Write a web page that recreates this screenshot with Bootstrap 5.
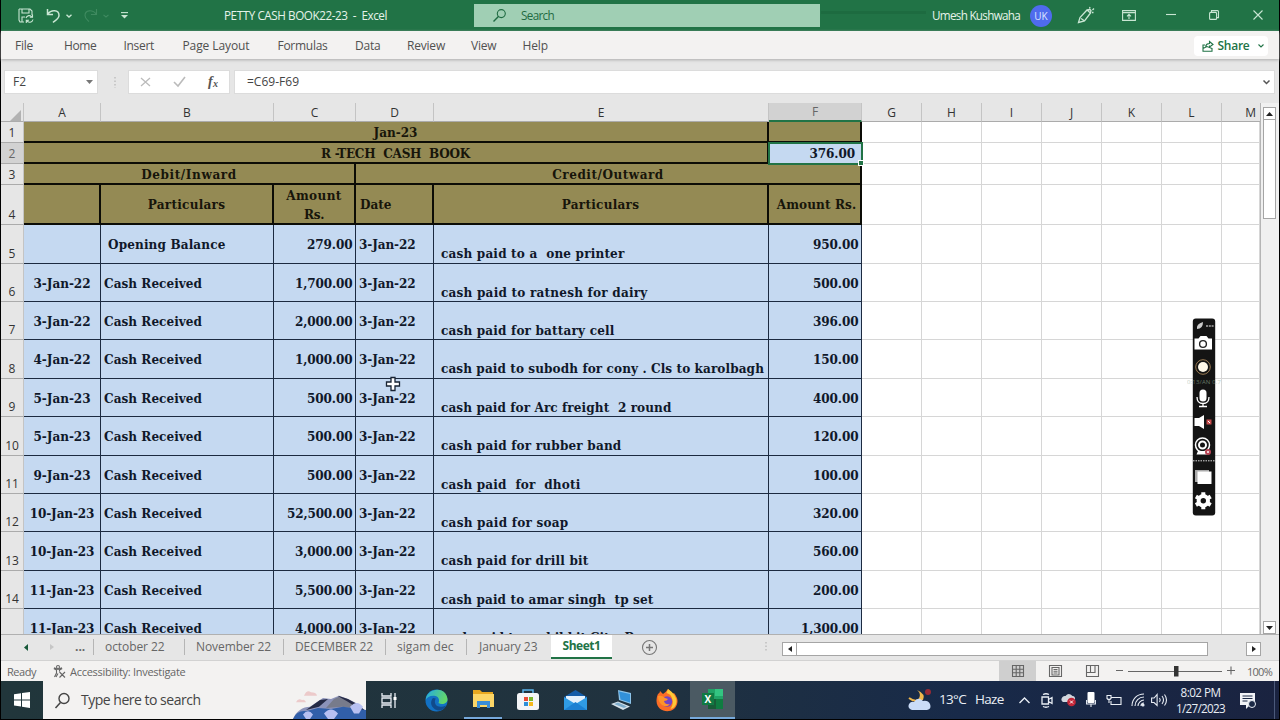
<!DOCTYPE html>
<html lang="en">
<head>
<meta charset="utf-8">
<meta name="viewport" content="width=device-width, initial-scale=1">
<title>PETTY CASH BOOK22-23 - Excel</title>
<link href="https://cdn.jsdelivr.net/npm/bootstrap@5.3.0/dist/css/bootstrap.min.css" rel="stylesheet">
<style>
:root{--xl:#217346}
html,body{height:720px;overflow:hidden}
body{font-family:"Open Sans","Noto Sans",sans-serif;font-size:12px;line-height:1;color:#444;background:#000}
.window{width:1278px;height:719px;margin-left:1px;background:#e6e6e6}
.bar{display:grid;align-items:center;justify-items:start}
.bar svg,.widget svg{display:block;overflow:visible}
.fit{white-space:pre;display:inline-block}
.ln{fill:none;stroke:currentColor;stroke-width:1.1}
/* title bar */
.titlebar{height:31px;background:linear-gradient(125deg,transparent 1090px,#1c693e 1091px,#1c693e 1097px,transparent 1098px),linear-gradient(#1d6b40,#1d6b40) 820px 11px/105px 3px no-repeat,var(--xl);color:#e6f3ea;grid-template-columns:17px 28px 20px 17px 20px 18px 103px 250px 458px 98px 47px 45px 44px 43px 44px 1fr}
.titlebar>svg{color:#c9e6d3}
.titlebar .dim{color:#3f8a60}
.titlebar .fit{font-size:11.7px}
.searchbox{width:346px;height:23px;background:#a0cfb4;color:#1f6b42}
.lens{margin-left:19px}
.lens+.fit{margin-left:15px}
.avatar{width:22px;height:22px;background:#4f6bed;color:#dfe5ff;font-size:10px}
/* menu */
.menubar{height:28px;padding-top:1px;background:#f3f2f1;color:#505050;grid-template-columns:14px 49px 59.5px 59px 95px 77.5px 52px 64px 51.5px 671px 1fr;box-shadow:0 1px 3px #aaa;position:relative}
.sharebtn{width:74px;height:20px;background:#fff;color:var(--xl)}
/* formula bar */
.formulabar{height:44px;padding-top:2px;grid-template-columns:3px 94px 30px 106px 1fr}
.fbox{height:24px;background:#fff;border:1px solid #dcdcdc}
.fxbox{width:102px}
.fxin{width:1041px}
/* sheet */
.sheetwrap{height:532px;overflow:hidden;border-bottom:1px solid #b0b0b0}
.sheet{display:grid;width:1259px;flex:none;grid-template-columns:23px 77px 173px 82px 78px 335px 93px repeat(6,60px) 38px;grid-template-rows:19px 21px 21px 21px 40px 38.6px repeat(10,38.4px);align-content:start;background:#fff;font-family:"DejaVu Serif Condensed","DejaVu Serif",serif;font-weight:700;font-size:13.4px;color:#10182a}
.sheet>div{display:flex;overflow:hidden;border-right:1px solid #d6d6d6;border-bottom:1px solid #d6d6d6;min-width:0}
.sheet>.hd{background:#e6e6e6;border-color:#c4c4c4;border-bottom-color:#ababab;font:400 12px "Open Sans",sans-serif;color:#333;align-items:center;justify-content:center}
.sheet>.rn{align-items:flex-end;line-height:15px;padding-bottom:2px}
.sheet>.sel{background:#d2d2d2;color:#666}
.sheet>.fcol{border-bottom:2px solid var(--xl)}
.sheet>.ol{background:#948a54;color:#17150a;border-right:2px solid #0c0c06;border-bottom:2px solid #0c0c06;align-items:center;justify-content:center;text-align:center;line-height:19px;padding-top:1px}
.sheet>.bl{background:#c5d9f1;border-color:#1c2a40;align-items:center;padding-top:2px}
.sheet>.part{align-items:flex-end;padding:0 0 2px 7px}
.sheet>.amt{padding-right:2.5px}
.corner{width:0;height:0;border-left:11px solid transparent;border-bottom:11px solid #b2b2b2;margin:6px 0 0 6px}
.sheet>.active{position:relative;overflow:visible;background:#c5d9f1;border:0;outline:2px solid var(--xl);outline-offset:-1px;align-items:center;justify-content:flex-end;padding-right:7px;z-index:2}
.handle{position:absolute;right:-2px;bottom:-2px;width:6px;height:6px;background:var(--xl);border:1px solid #fff}
.vscroll{background:#f0f0f0;border-left:1px solid #b5b5b5;padding-left:2px}
.sbtn{width:13px;height:13px;background:#fff;border:1px solid #a5a5a5;color:#222}
.vthumb{width:13px;height:99px;background:#fff;border:1px solid #a5a5a5;border-top:0}
/* sheet tabs */
.tabs{height:26px;color:#666;border-bottom:1px solid #d2d2d2;grid-template-columns:22px 27px 25px 18px 91px 99px 102px 81px 85px 91px 123px 17px 1fr;align-items:start}
.tabs>*{height:24px;display:flex;align-items:center}
.tabs>.tb{border-left:1px solid #b5b5b5;padding-left:11px;height:16px;margin-top:4px}
.tactive{background:#fff;border-bottom:2px solid var(--xl);color:var(--xl);font-weight:700;width:61px;justify-content:center}
.tabs>.tb:nth-child(9){padding-left:12px}
.hs{height:14px;border:1px solid #a5a5a5;background:#fff}
.hbtn{width:15px}
.hthumb{width:411px}
.hgap{width:38px}
/* status */
.status{height:20px;background:#f3f2f1;font-size:11px;color:#666;grid-template-columns:6px 46px 17px 929px 41.5px 37px 38.5px 131px 1fr}
.view-on{width:37px;height:100%;background:#cfcfcf;display:flex;align-items:center;justify-content:center}
/* taskbar */
.taskbar{height:38px;background:linear-gradient(90deg,#21363b 0,#20323f 50%,#182a49 75%,#1a2340 100%);color:#e9eef5;grid-template-columns:42px 338px 44px 47px 45px 47px 47px 45px 34px 218px 31px 36px 44px 22px 20px 25px 20px 25px 20px 25px 57px 1fr}
.startbtn{width:42px;height:100%;display:flex;align-items:center;padding-left:13px}
.tsearch{width:323px;height:100%;background:#f3f2f1;color:#444;overflow:hidden;display:flex;align-items:center}
.tsearch .fit{font-size:14px}
.opened{width:38px;height:100%;border-bottom:2px solid #76a9dc;display:flex;align-items:center;justify-content:center;margin-left:-8px}
.xlrun{width:45px;height:100%;background:#4b5a63;border-bottom:2px solid #76a9dc;display:flex;align-items:center;justify-content:center}
.t14{font-size:13.5px}
.clock{text-align:center;line-height:16px;font-size:11.7px}
/* floating recorder and pointer */
.widget{position:absolute;left:1192px;top:318px;width:24px;height:198px}
.pointer{position:absolute;left:385px;top:376px}
</style>
</head>
<body>
<div class="window d-flex flex-column">

<header class="bar titlebar">
  <span></span>
  <svg width="16" height="16" viewBox="0 0 16 16" class="ln"><path d="M1 1h11l2 2v4M1 1v11l1 2h4M4 1v4h7V1M4 14V9h3M8 10a3.4 3.4 0 0 1 6-1M14.500 6.500V9.200h-2.700M15 11.500a3.400 3.400 0 0 1-6.300 1M8.300 15v-2.700h2.700" class="ln"/></svg>
  <svg width="15" height="15" viewBox="0 0 15 15" class="ln"><path d="M1.500 1v5.500H7M1.800 6.200C5 1.500 13 1.500 13 7.500c0 3-3.500 5-6 7" stroke-width="1.500"/></svg>
  <svg width="6" height="4" viewBox="0 0 6 4" class="ln"><path d="M.5.8 3 3 5.500.8" stroke-width="1.400"/></svg>
  <svg width="15" height="15" viewBox="0 0 15 15" class="ln dim"><path d="M13.500 1v5.500H8M13.200 6.200C10 1.500 2 1.500 2 7.500c0 3 2 4 4 6"/></svg>
  <svg width="6" height="4" viewBox="0 0 6 4" class="ln dim"><path d="M.5.8 3 3 5.500.8"/></svg>
  <svg width="7" height="7" viewBox="0 0 7 7"><path d="M0 .6h7" class="ln"/><path d="M0 3h7L3.500 6.500z" fill="currentColor"/></svg>
  <span class="fit" data-w="163">PETTY CASH BOOK22-23  -  Excel</span>
  <div class="searchbox d-flex align-items-center">
    <svg width="13" height="13" viewBox="0 0 13 13" class="ln lens"><circle cx="8.300" cy="4.600" r="4"/><path d="M5.400 7.500.5 12.500" stroke-width="1.400"/></svg>
    <span class="fit" data-w="33">Search</span>
  </div>
  <span class="fit" data-w="88">Umesh Kushwaha</span>
  <span class="avatar rounded-circle d-flex align-items-center justify-content-center">UK</span>
  <svg width="17" height="17" viewBox="0 0 17 17" class="ln"><path d="M1.500 15.500 3 10.500 10 3l3.500 3-6 8zM10 3l3-.5 1 1-.5 2.500M4 11.500l3 2M12.500 1.500 13 0M15.500 3 17 1.500M15 5.500h1.500" stroke-width="1.300"/></svg>
  <svg width="14" height="11" viewBox="0 0 14 11" class="ln"><path d="M.6.6h12.800v9.800H.6zM.6 2.600h12.800M7 9V4.500M5 6.300l2-2 2 2"/></svg>
  <svg width="10" height="4" viewBox="0 0 10 4" class="ln"><path d="M0 .5h10"/></svg>
  <svg width="10" height="12" viewBox="0 0 10 12" class="ln"><rect x=".6" y="2.400" width="7" height="7" rx="1"/><path d="M2.500 2.200V.6h6q1 0 1 1v6H8"/></svg>
  <svg width="10" height="12" viewBox="0 0 10 12" class="ln"><path d="m.5.5 9 9M9.500.5l-9 9"/></svg>
</header>

<nav class="bar menubar">
  <span></span>
  <span class="fit" data-w="18">File</span><span class="fit" data-w="32.500">Home</span><span class="fit" data-w="30.500">Insert</span><span class="fit" data-w="67">Page Layout</span><span class="fit" data-w="50">Formulas</span><span class="fit" data-w="25.500">Data</span><span class="fit" data-w="38">Review</span><span class="fit" data-w="25.500">View</span><span class="fit" data-w="25.500">Help</span>
  <div class="sharebtn rounded-1 d-flex align-items-center ps-1">
    <svg width="12" height="12" viewBox="0 0 12 12" class="ln ms-1"><path d="M3 5H1v6.300h9V8M1 8.500 5 6.500l5 2M3.500 6.500c.5-2 2-3 4-3V1.500L11 4.500 7.500 7V5.500"/></svg>
    <span class="fit fw-semibold ms-1" data-w="32">Share</span>
    <svg width="6" height="4" viewBox="0 0 6 4" class="ln ms-auto me-1"><path d="M.5.5 3 3 5.500.5"/></svg>
  </div>
</nav>

<div class="bar formulabar">
  <span></span>
  <div class="fbox w-100 d-flex align-items-center justify-content-between ps-1 pe-1"><span class="fit ms-1" data-w="13">F2</span><svg width="7" height="4" viewBox="0 0 7 4"><path d="M0 0h7L3.500 4z" fill="#777"/></svg></div>
  <svg width="2" height="11" viewBox="0 0 2 11" class="ms-3"><path d="M1 0v11" stroke="#aaa" stroke-dasharray="1.500 2"/></svg>
  <div class="fbox fxbox d-flex align-items-center">
    <svg width="102" height="20" viewBox="0 0 102 20"><path d="m12 6 9 8M21 6l-9 8" fill="none" stroke="#bbb" stroke-width="1.300"/><path d="m45 10 4 4 7-9" fill="none" stroke="#bbb" stroke-width="1.600"/><text x="79" y="14" font-family="Liberation Serif" font-style="italic" font-weight="700" font-size="14" fill="#555">f</text><text x="84" y="14.500" font-family="Liberation Serif" font-style="italic" font-weight="700" font-size="10" fill="#555">x</text></svg>
  </div>
  <div class="fbox fxin d-flex align-items-center justify-content-between ps-2 pe-1"><span class="fit ps-1" data-w="56">=C69-F69</span><svg width="7" height="5" viewBox="0 0 7 5"><path d="m.5.5 3 3 3-3" fill="none" stroke="#555" stroke-width="1.500"/></svg></div>
</div>

<main class="sheetwrap d-flex">
  <div class="sheet" id="sheet"></div>
  <div class="vscroll d-flex flex-column flex-grow-1">
    <div class="sbtn mt-1 flex-shrink-0 d-flex align-items-center justify-content-center"><svg width="7" height="4" viewBox="0 0 7 4"><path d="M0 4h7L3.500 0z" fill="currentColor"/></svg></div>
    <div class="vthumb"></div>
    <div class="sbtn mt-auto flex-shrink-0 d-flex align-items-center justify-content-center"><svg width="7" height="4" viewBox="0 0 7 4"><path d="M0 0h7L3.500 4z" fill="currentColor"/></svg></div>
  </div>
</main>

<div class="bar tabs">
  <span></span>
  <span><svg width="5" height="7" viewBox="0 0 5 7" class="ms-0"><path d="M5 0v7L1 3.500z" fill="#17593a"/></svg></span>
  <span><svg width="4" height="6" viewBox="0 0 4 6"><path d="M0 0v6l4-3z" fill="#c6c6c6"/></svg></span>
  <span class="fw-bold">...</span>
  <span class="tb"><span class="fit" data-w="59.500">october 22</span></span>
  <span class="tb"><span class="fit" data-w="75">November 22</span></span>
  <span class="tb"><span class="fit" data-w="78">DECEMBER 22</span></span>
  <span class="tb"><span class="fit" data-w="56.500">sigam dec</span></span>
  <span class="tb"><span class="fit" data-w="58.500">January 23</span></span>
  <span class="tactive"><span class="fit" data-w="38">Sheet1</span></span>
  <span><svg width="15" height="15" viewBox="0 0 15 15" class="ln" color="#777"><circle cx="7.500" cy="7.500" r="7"/><path d="M7.500 4v7M4 7.500h7" stroke-width="1.500"/></svg></span>
  <span><svg width="2" height="10" viewBox="0 0 2 10"><path d="M1 0v10" stroke="#aaa" stroke-dasharray="1.500 2"/></svg></span>
  <div class="w-100 pt-1">
    <div class="hs hbtn d-flex align-items-center justify-content-center"><svg width="4" height="6" viewBox="0 0 4 6"><path d="M4 0v6L0 3z" fill="#222"/></svg></div>
    <div class="hs hthumb border-start-0"></div><div class="hgap"></div>
    <div class="hs hbtn d-flex align-items-center justify-content-center"><svg width="4" height="6" viewBox="0 0 4 6"><path d="M0 0v6l4-3z" fill="#222"/></svg></div>
  </div>
</div>

<div class="bar status">
  <span></span>
  <span class="fit" data-w="29">Ready</span>
  <svg width="13" height="13" viewBox="0 0 13 13" class="ln"><circle cx="5" cy="2" r="1.500"/><path d="M.8 3.500 3.500 5v3L1.500 12M9.200 3.500 6.500 5v1.500M1 2.800l4 1.500 4-1.500M3 12l2-3.500M6.500 7l5.500 5.500M12 7l-5.500 5.500"/></svg>
  <span class="fit" data-w="115.500">Accessibility: Investigate</span>
  <span class="view-on"><svg width="12" height="12" viewBox="0 0 12 12" class="ln"><path d="M.5.5h11v11H.5zM.5 4.200h11M.5 7.800h11M4.200.5v11M7.800.5v11"/></svg></span>
  <svg width="13" height="12" viewBox="0 0 13 12" class="ln ms-2"><path d="M.5.500h12v11H.5zM3 2.500h7v7.500H3zM4.500 4.500h4M4.500 6.200h4M4.500 8h4"/></svg>
  <svg width="13" height="12" viewBox="0 0 13 12" class="ln ms-2"><path d="M.5.500h12v11H.5zM.5 7.500H9v-7M4.500.5v7"/></svg>
  <svg width="116" height="12" viewBox="0 0 116 12" class="ln"><path d="M0 5.500h7M12 6.500h94M111 5.500h8M115 1.500v8"/><path d="M58 1h4.500v10.500H58z" fill="#333" stroke="none"/></svg>
  <span class="fit" data-w="25">100%</span>
</div>

<footer class="bar taskbar">
  <span class="startbtn"><svg width="16" height="16" viewBox="0 0 16 16"><path d="M0 2.300 7 1.300v6.200H0zM8 1.100 16 0v7.500H8zM0 8.400h7v6.200l-7-1zM8 8.400h8V16l-8-1.200z" fill="#fff"/></svg></span>
  <div class="tsearch">
    <svg width="38" height="27" viewBox="0 0 38 27" class="ln flex-shrink-0"><circle cx="21" cy="11.500" r="5" stroke-width="1.400"/><path d="m17.500 15.500-5 5.500" stroke-width="1.500"/></svg>
    <span class="fit" data-w="119.500">Type here to search</span>
    <svg width="73" height="30" viewBox="0 0 73 27" preserveAspectRatio="none" class="ms-auto mt-auto flex-shrink-0"><path d="M4 17q2-4 6-2 3-1 4 2zM12 11q3-6 7-3 5 0 6 3z" transform="translate(-1 -5)" fill="#eccaca"/><path d="M0 27C3 20 10 16 17 16l13-8 8 1 8-3 9 3 9 4 9 7v10z" fill="#8c93ba"/><path d="m13 19 14-9 8-1-9 7zM45 6l10 3 8 4 10 7v3l-14-7-7-3z" fill="#252a45"/><path d="m33 17 8-8 5-2 8 4 12 7-8-1-9-1z" fill="#777b8b"/><path d="M0 27q4-8 13-7l12-3 13 1 12-2 23 3v8z" fill="#315fa9"/><path d="M10 23q5-6 10 0l-3 4h-4zM31 22q7-7 14 0l-4 5h-6zM57 16q7-7 13 0l-4 6h-5z" fill="#b7c0f1"/></svg>
  </div>
  <svg width="16" height="15" viewBox="0 0 16 15" class="ln"><path d="M1 0v3h9V0M1 15v-3h9v3M1 5h9v5H1zM14 0v15" stroke-width="1.300"/><path d="M12.500 4h3v3h-3z" fill="#fff" stroke="none"/></svg>
  <svg width="23" height="23" viewBox="0 0 23 23"><defs><linearGradient id="eg" x1="0" y1="0" x2="1" y2=".3"><stop stop-color="#21a9e6"/><stop offset="1" stop-color="#62d66b"/></linearGradient></defs><circle cx="11.500" cy="11.500" r="11" fill="#1271c4"/><path d="M.7 11C1-1 21-4 22.500 10c.3 5-6 6-9 4 1-2 1-6-3-7C6 6 2 8 .7 11z" fill="url(#eg)"/><path d="M8 9c-5 6 1 13 7 12.500 3-.5 5-2.500 6-5-4 2-10 2-11-2.500-.3-2 0-3 .8-4.500z" fill="#114a8b"/></svg>
  <span class="opened"><svg width="21" height="20" viewBox="0 0 21 20"><path d="M0 1h7l2 2h11v15H0z" fill="#e8a820"/><path d="M0 5h21v13H0z" fill="#fcd667"/><path d="M4 12h13v7h-3v-3H7v3H4z" fill="#3b8ed6"/></svg></span>
  <svg width="22" height="22" viewBox="0 0 22 22"><path d="M6 5V1h10v4" fill="none" stroke="#5ab4ec" stroke-width="1.500"/><rect y="4" width="22" height="17" rx="2.500" fill="#f4f5f7"/><path d="M7 8h4v4H7z" fill="#e94b35"/><path d="M12 8h4v4h-4z" fill="#7bb62d"/><path d="M7 13h4v4H7z" fill="#2f8fd8"/><path d="M12 13h4v4h-4z" fill="#f5b81d"/></svg>
  <svg width="23" height="20" viewBox="0 0 23 20"><path d="M0 7 11.500 0 23 7v13H0z" fill="#145ca8"/><path d="M2 6h19v8H2z" fill="#e4f0fb"/><path d="m0 7 11.500 7L23 7v13H0z" fill="#2f9be4"/><path d="m0 20 11.500-8L23 20z" fill="#1c80d2"/></svg>
  <svg width="21" height="20" viewBox="0 0 21 20"><path d="m7 0 13 3v11L8 10z" fill="#8cc4ea"/><path d="m8 1.500 11 2.500v8.500L9.500 9.500z" fill="#3291d9"/><path d="m0 14 7-2.500 12 5-7 3.500z" fill="#d5e1e9"/><path d="m3 14 4-1.500 9 4-3 1.500z" fill="#7eaccb"/></svg>
  <svg width="22" height="22" viewBox="0 0 22 22"><path d="M2 5q2-1 2-3l3 3q3-2 5-5 3 2 4 5l2-1q4 5 3.500 9C20 26 1 25 .5 12 .5 9 1 7 2 5z" fill="#fb6d26"/><path d="M12 0q9 6 8.500 13-1 6-6 7 4-6 1-12-1-3-5-4z" fill="#ffc937"/><circle cx="11" cy="12.500" r="5.200" fill="#7344c4"/><path d="M2 7q4-1 7 2l3 1q-1 2-4 2 1 4 6 3-3 4-8 1-4-3-4-9z" fill="#ff9429"/></svg>
  <span class="xlrun"><svg width="21" height="20" viewBox="0 0 21 20"><path d="M6 0h15v20H6z" fill="#21a366"/><path d="M13 0h8v7h-8z" fill="#33c481"/><path d="M6 10h15v10H6z" fill="#107c41"/><path d="M6 10h8v10H6z" fill="#185c37"/><path d="M0 4h12v12H0z" fill="#117a43"/><text x="2.500" y="13.500" font-family="Open Sans" font-weight="700" font-size="10" fill="#fff">X</text></svg></span>
  <svg width="24" height="22" viewBox="0 0 24 22"><path d="M9 1c4 3 4 8-1 11l7-1q3-6-6-10z" fill="#f2b84b"/><path d="M1 9q5 4 10 2" stroke="#f2b84b" stroke-width="2" fill="none"/><circle cx="20" cy="3" r="3" fill="#982a35"/><path d="M4 21q-5-2-3-6 2-3 5-2 4-6 9-1 5-1 7 3 2 5-3 6z" fill="#cadcf7"/></svg>
  <span class="fit t14" data-w="27">13°C</span>
  <span class="fit t14" data-w="28.500">Haze</span>
  <svg width="11" height="7" viewBox="0 0 11 7" class="ln"><path d="m.5 6 5-5 5 5" stroke-width="1.400"/></svg>
  <svg width="12" height="15" viewBox="0 0 12 15" class="ln"><path d="M2 1.500Q5 0 8 1.500M2 13.500q3 1.500 6 0M1 4h6.500v7H1zM7.500 6.500 11 4.500v6l-3.500-2" stroke-width="1.300"/></svg>
  <svg width="15" height="14" viewBox="0 0 15 14"><path d="M2 9q-3-2-.5-5Q3 2.500 4.500 3q3-4 7 0 3 0 2.500 4l-5 2z" fill="#d2d7de"/><circle cx="10.500" cy="9" r="4.300" fill="#c32638"/><path d="m9 7.500 3 3m0-3-3 3" stroke="#fff"/></svg>
  <svg width="10" height="16" viewBox="0 0 10 16"><rect x="1.500" width="7" height="11" rx="1" fill="#fff"/><path d="M.6 8v4h8.800V8M5 12v3" class="ln"/></svg>
  <svg width="16" height="11" viewBox="0 0 16 11" class="ln"><path d="M5 2.500h10v7H5V6M1 .5v3q2 2 4 0v-3zM3 5v3"/></svg>
  <svg width="14" height="14" viewBox="0 0 14 14" class="ln"><path d="M1 13C1 6 6 1 13 1M4 13c0-5 4-9 9-9M7 13c0-3 3-6 6-6M10 13q0-3 3-3"/><circle cx="12" cy="12" r="1" fill="currentColor"/></svg>
  <svg width="16" height="14" viewBox="0 0 16 14" class="ln"><path d="M.6 5h2.500l3-3.500v11L3 9.500H.6zM8.500 5q1.500 2 0 4M11 3q3 4 0 8M13.500 1.500q4 5.500 0 11"/></svg>
  <span class="clock"><span class="fit" data-w="40">8:02 PM</span><br><span class="fit" data-w="49">1/27/2023</span></span>
  <svg width="44" height="38" viewBox="0 0 44 38"><path d="M7 12h15v12h-5l-4 4v-4H7z" fill="#f1f3f7"/><path d="M9.500 15h10M9.500 17.500h10M9.500 20h5" stroke="#1a2845"/><circle cx="19" cy="23" r="3.500" fill="#1a2845" stroke="#e8edf4"/><path d="M41.500 0v38" stroke="#4b597a"/></svg>
</footer>
</div>

<svg class="pointer" width="16" height="16" viewBox="0 0 16 16"><path d="M6 1.500h4V6h4.500v4H10v4.500H6V10H1.500V6H6z" fill="#fff" stroke="#182333" stroke-width="1.300"/></svg>

<div class="widget">
<svg width="24" height="198" viewBox="0 0 24 198">
  <rect x=".8" y=".6" width="22.400" height="197" rx="3" fill="#141414"/>
  <path d="M5 11q-1-5 6-7 0 7-6 7z" fill="#ccc"/><path d="M14 8h8" stroke="#aaa" stroke-width="1.500" stroke-dasharray="2 .8"/>
  <path d="M2.500 20.500h4l2-2.500h6l2 2.500h3.500v11H2.500z" fill="#fff"/><circle cx="11" cy="26" r="3.400" fill="#fff" stroke="#222" stroke-width="1.400"/>
  <circle cx="11" cy="49" r="7.300" fill="none" stroke="#9a7a52"/><circle cx="11" cy="49" r="5" fill="#fff8e8"/>
  <text x="-5" y="65.500" font-size="6" fill="#9bb49b" opacity=".6" font-family="Open Sans" textLength="34">0:13/AN 0.7</text>
  <rect x="7.500" y="71.500" width="7" height="12" rx="3.500" fill="#fff"/><path d="M5 79q0 6.500 6 6.500t6-6.500M11 85v3M7 88.500h8" fill="none" stroke="#fff" stroke-width="1.300"/>
  <path d="M2.500 100h4.500l5-3v14l-5-3H2.500z" fill="#fff"/><path d="M14.500 101.500h5v5h-5z" fill="#c94d4d"/><path d="m16 103 2 2" stroke="#fff"/>
  <circle cx="10.500" cy="127" r="7" fill="none" stroke="#fff" stroke-width="1.500"/><circle cx="10.500" cy="127" r="3.500" fill="none" stroke="#fff" stroke-width="2"/><path d="m6 133-1.500 3.500h11L14 133z" fill="#fff"/><circle cx="16" cy="134" r="3" fill="#b84555"/><circle cx="16" cy="134" r="1" fill="#fff"/>
  <path d="M1 142.800h22" stroke="#ddd" stroke-dasharray="1.500 1"/>
  <path d="M3 152h14v12H3z" fill="#aaa"/><path d="M5.500 153.500h14V166h-14z" fill="#fff"/>
  <g transform="translate(11.300 182.700)"><circle r="4.700" fill="none" stroke="#fff" stroke-width="4"/><path d="M0-8.500V-5M0 8.500V5M-7.400-4.200-4.500-2.500M7.400 4.200 4.500 2.500M-7.400 4.200-4.500 2.500M7.400-4.200 4.500-2.500" stroke="#fff" stroke-width="4"/></g>
</svg>
</div>

<script src="https://cdn.jsdelivr.net/npm/bootstrap@5.3.0/dist/js/bootstrap.bundle.min.js"></script>
<script>
const sheet = document.getElementById('sheet');
const cell = (cls, text = '', w = 0, span = 1) => {
  const d = document.createElement('div');
  d.className = cls;
  if (span > 1) d.style.gridColumn = 'span ' + span;
  if (text) d.innerHTML = w ? `<span class="fit" data-w="${w}">${text}</span>` : text;
  sheet.append(d);
  return d;
};
const blanks = () => { for (let i = 0; i < 7; i++) cell(''); };

cell('hd', '<i class="corner"></i>');
for (const c of 'ABCDEFGHIJKLM') cell('hd' + (c === 'F' ? ' sel fcol' : '') + (c === 'M' ? ' justify-content-end border-end-0 pe-1' : ''), c);

cell('hd rn', '1'); cell('ol', 'Jan-23', 44, 5); cell('ol'); blanks();
cell('hd rn sel', '2'); cell('ol', 'R -TECH  CASH  BOOK', 149, 5);
cell('active', '<span class="fit" data-w="45.5">376.00</span><i class="handle"></i>'); blanks();
cell('hd rn', '3'); cell('ol', 'Debit/Inward', 95.5, 3); cell('ol', 'Credit/Outward', 111.5, 3); blanks();
cell('hd rn', '4'); cell('ol'); cell('ol', 'Particulars', 77.5);
cell('ol', '<span><span class="fit" data-w="55.5">Amount</span><br><span class="fit" data-w="20">Rs.</span></span>');
cell('ol justify-content-start ps-1', 'Date', 31.5); cell('ol', 'Particulars', 77.5); cell('ol ps-1', 'Amount Rs.', 79.5); blanks();

const rows = [
  ['', 'Opening Balance', '279.00', 'cash paid to a  one printer', 183.5, '950.00'],
  ['3-Jan-22', 'Cash Received', '1,700.00', 'cash paid to ratnesh for dairy', 206.5, '500.00'],
  ['3-Jan-22', 'Cash Received', '2,000.00', 'cash paid for battary cell', 173.5, '396.00'],
  ['4-Jan-22', 'Cash Received', '1,000.00', 'cash paid to subodh for cony . Cls to karolbagh', 323, '150.00'],
  ['5-Jan-23', 'Cash Received', '500.00', 'cash paid for Arc freight  2 round', 230.5, '400.00'],
  ['5-Jan-23', 'Cash Received', '500.00', 'cash paid for rubber band', 180.5, '120.00'],
  ['9-Jan-23', 'Cash Received', '500.00', 'cash paid  for  dhoti', 139.5, '100.00'],
  ['10-Jan-23', 'Cash Received', '52,500.00', 'cash paid for soap', 127.5, '320.00'],
  ['10-Jan-23', 'Cash Received', '3,000.00', 'cash paid for drill bit', 147.5, '560.00'],
  ['11-Jan-23', 'Cash Received', '5,500.00', 'cash paid to amar singh  tp set', 212.5, '200.00'],
  ['11-Jan-23', 'Cash Received', '4,000.00', 'cash paid to mobil kit City  Rs', 200, '1,300.00']
];
const amount = { 6: 45.5, 8: 57.5, 9: 65.5 };
rows.forEach((r, i) => {
  cell('hd rn', i < 10 ? String(i + 5) : '');
  cell('bl justify-content-center', r[0], r[0].length > 8 ? 64.5 : 57);
  cell('bl', r[1], i ? 98 : 117.5).style.paddingLeft = i ? '3px' : '7px';
  cell('bl justify-content-end amt', r[2], amount[r[2].length]);
  cell('bl', '3-Jan-22', 56.5).style.paddingLeft = '3px';
  cell('bl part', r[3], r[4]);
  cell('bl justify-content-end amt', r[5], amount[r[5].length]);
  blanks();
});

// Track each label so that it fills its intended width
document.querySelectorAll('.fit').forEach(el => {
  const n = el.textContent.length;
  const gap = (parseFloat(el.dataset.w) - el.getBoundingClientRect().width) / n;
  el.style.letterSpacing = gap.toFixed(3) + 'px';
});
</script>
</body>
</html>
